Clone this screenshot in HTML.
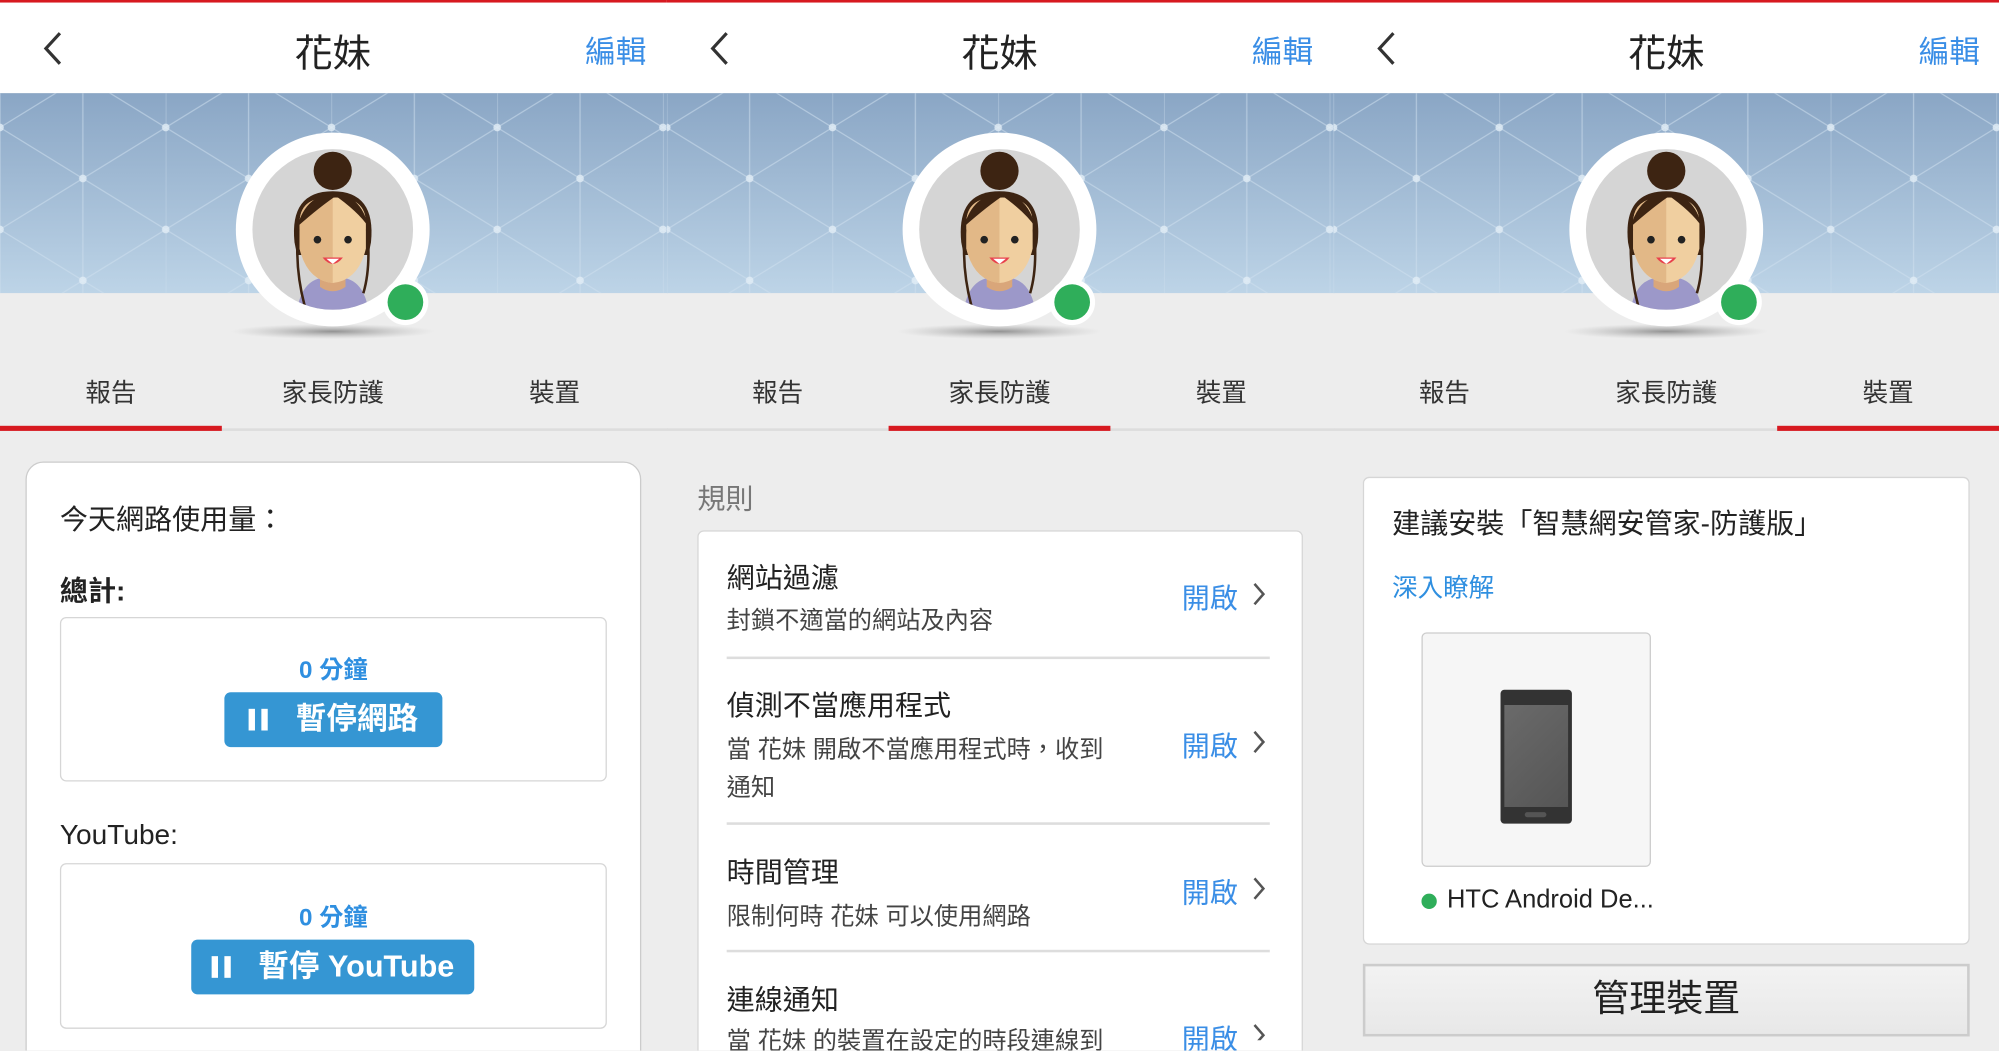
<!DOCTYPE html>
<html><head><meta charset="utf-8">
<style>
*{margin:0;padding:0;box-sizing:border-box}
html,body{width:1999px;height:1051px;overflow:hidden;background:#ededed}
body{font-family:"Liberation Sans","Noto Sans CJK TC",sans-serif;color:#222}
#w{position:absolute;left:0;top:0;width:1568px;height:824px;transform:scale(1.27487);transform-origin:0 0;background:#ededed}
.a{position:absolute;white-space:nowrap}
.p{position:absolute;top:0;width:524px;height:824px;overflow:hidden}
.hdr{position:absolute;left:0;top:0;width:524px;height:73px;background:#fff;border-top:2px solid #d71920}
.ttl{left:0;width:522px;text-align:center;top:17px;font-size:30px;color:#222}
.edit{left:459px;top:21px;font-size:24px;color:#3a8ee6}
.ban{position:absolute;left:0;top:73px;width:524px;height:157px}
.tab{top:292px;font-size:20px;color:#333;width:174px;text-align:center}
.tline{position:absolute;top:336px;left:0;width:524px;height:2px;background:#ddd}
.tact{position:absolute;top:334px;width:174px;height:4px;background:#d71920}
.card{position:absolute;background:#fff;border:1px solid #d6d6d6}
.blue{color:#2f8fe0}
.btn{position:absolute;background:#3596d3;color:#fff;border-radius:5px;font-weight:bold;font-size:24px;text-align:center;line-height:43px}
.btn b{display:inline-block;width:5px;height:17px;background:#fff;margin-right:5px;vertical-align:-1px}
.row{font-size:22px;color:#222}
.sub{font-size:19px;color:#444}
.on{font-size:22px;color:#3a8ee6}
.div{position:absolute;left:47px;width:426px;height:2px;background:#ddd}
</style></head><body><div id="w">

<svg width="0" height="0" style="position:absolute">
<defs>
<linearGradient id="bg" x1="0" y1="0" x2="0" y2="1"><stop offset="0" stop-color="#8aa6c5"/><stop offset="1" stop-color="#bdd4e7"/></linearGradient>
<pattern id="lat" width="130" height="80" patternUnits="userSpaceOnUse" x="0" y="-13">
<g stroke="#cfe0ef" stroke-opacity=".55" stroke-width="1" fill="none">
<line x1="0" y1="0" x2="0" y2="80"/><line x1="65" y1="0" x2="65" y2="80"/>
<line x1="0" y1="40" x2="65" y2="0"/><line x1="0" y1="40" x2="65" y2="80"/>
<line x1="65" y1="0" x2="130" y2="40"/><line x1="65" y1="80" x2="130" y2="40"/>
</g>
<g fill="#e2edf6" fill-opacity=".8"><circle cx="0" cy="40" r="3"/><circle cx="130" cy="40" r="3"/><circle cx="65" cy="0" r="3"/><circle cx="65" cy="80" r="3"/></g>
</pattern>
<radialGradient id="sh"><stop offset="0" stop-color="#555" stop-opacity=".6"/><stop offset="1" stop-color="#999" stop-opacity="0"/></radialGradient>
<g id="av">
<ellipse cx="0" cy="80" rx="80" ry="6" fill="url(#sh)"/>
<circle r="76" fill="#fff"/>
<circle r="63" fill="#d5d5d5"/>
<clipPath id="cc"><circle r="63"/></clipPath>
<g clip-path="url(#cc)">
<path d="M-28 63 Q-24 40 -8 38 L8 38 Q24 40 28 63Z" fill="#9c98c9"/>
<path d="M-10 28 L-10 45 Q0 52 10 45 L10 28Z" fill="#d9a67a"/>
<path d="M-30 10 Q-34 -30 0 -30 Q34 -30 30 10 L28 20 L-28 20Z" fill="#3d2412"/>
<circle cx="0" cy="-46" r="15" fill="#3d2412"/>
<path d="M-26 -5 Q-26 -26 0 -25 Q26 -26 26 -5 L26 15 Q20 40 0 42 Q-20 40 -26 15Z" fill="#f0cfa0"/>
<path d="M0 -25 Q-26 -26 -26 -5 L-26 15 Q-20 40 0 42Z" fill="#e2b887"/>
<path d="M-28 -2 Q-20 -30 5 -28 Q-10 -18 -28 -2Z M28 -2 Q22 -28 0 -28 Q20 -14 28 -2Z" fill="#3d2412"/>
<path d="M-27 0 Q-30 30 -22 60 M27 0 Q30 30 24 50" stroke="#3d2412" stroke-width="2" fill="none"/>
<circle cx="-12" cy="8" r="3" fill="#222"/><circle cx="12" cy="8" r="3" fill="#222"/>
<path d="M-8 22 Q0 32 8 22Z" fill="#e8414c"/><path d="M-5 23 L5 23 L0 27Z" fill="#fff"/>
</g>
<circle cx="57" cy="57" r="18" fill="#fff"/><circle cx="57" cy="57" r="14" fill="#2fae5a"/>
</g>
</defs></svg>

<!-- PANEL 1 -->
<div class="p" style="left:0">
<div class="hdr"></div>
<svg class="a" style="left:32px;top:24px" width="20" height="28"><path d="M15 2 L4 14 L15 26" stroke="#333" stroke-width="2.5" fill="none"/></svg>
<div class="a ttl">花妹</div><div class="a edit">編輯</div>
<svg class="ban" width="524" height="157"><rect width="524" height="157" fill="url(#bg)"/><rect width="524" height="157" fill="url(#lat)"/></svg>
<svg class="a" style="left:160px;top:90px" width="202" height="190"><use href="#av" x="101" y="90"/></svg>
<div class="a tab" style="left:0">報告</div><div class="a tab" style="left:174px">家長防護</div><div class="a tab" style="left:348px">裝置</div>
<div class="tline"></div><div class="tact" style="left:0"></div>
<div class="card" style="left:20px;top:362px;width:483px;height:480px;border-radius:14px;border-color:#ccc"></div>
<div class="a" style="left:47px;top:390px;font-size:22px">今天網路使用量：</div>
<div class="a" style="left:47px;top:446px;font-size:22px;font-weight:bold">總計:</div>
<div class="card" style="left:47px;top:484px;width:429px;height:129px;border-radius:5px"></div>
<div class="a blue" style="left:47px;width:429px;text-align:center;top:511px;font-size:19px;font-weight:bold">0 分鐘</div>
<div class="btn" style="left:176px;top:543px;width:171px;height:43px"><b></b><b style="margin-right:22px"></b>暫停網路</div>
<div class="a" style="left:47px;top:642px;font-size:22px">YouTube:</div>
<div class="card" style="left:47px;top:677px;width:429px;height:130px;border-radius:5px"></div>
<div class="a blue" style="left:47px;width:429px;text-align:center;top:705px;font-size:19px;font-weight:bold">0 分鐘</div>
<div class="btn" style="left:150px;top:737px;width:222px;height:43px"><b></b><b style="margin-right:22px"></b>暫停 YouTube</div>
</div>

<!-- PANEL 2 -->
<div class="p" style="left:523px">
<div class="hdr"></div>
<svg class="a" style="left:32px;top:24px" width="20" height="28"><path d="M15 2 L4 14 L15 26" stroke="#333" stroke-width="2.5" fill="none"/></svg>
<div class="a ttl">花妹</div><div class="a edit">編輯</div>
<svg class="ban" width="524" height="157"><rect width="524" height="157" fill="url(#bg)"/><rect width="524" height="157" fill="url(#lat)"/></svg>
<svg class="a" style="left:160px;top:90px" width="202" height="190"><use href="#av" x="101" y="90"/></svg>
<div class="a tab" style="left:0">報告</div><div class="a tab" style="left:174px">家長防護</div><div class="a tab" style="left:348px">裝置</div>
<div class="tline"></div><div class="tact" style="left:174px"></div>
<div class="a" style="left:24px;top:374px;font-size:22px;color:#777">規則</div>
<div class="card" style="left:24px;top:416px;width:475px;height:420px;border-radius:5px"></div>
<div class="a row" style="left:47px;top:436px">網站過濾</div>
<div class="a sub" style="left:47px;top:472px">封鎖不適當的網站及內容</div>
<div class="div" style="top:515px"></div>
<div class="a row" style="left:47px;top:536px">偵測不當應用程式</div>
<div class="a sub" style="left:47px;top:573px">當 花妹 開啟不當應用程式時，收到</div>
<div class="a sub" style="left:47px;top:603px">通知</div>
<div class="div" style="top:645px"></div>
<div class="a row" style="left:47px;top:667px">時間管理</div>
<div class="a sub" style="left:47px;top:704px">限制何時 花妹 可以使用網路</div>
<div class="div" style="top:745px"></div>
<div class="a row" style="left:47px;top:767px">連線通知</div>
<div class="a sub" style="left:47px;top:802px">當 花妹 的裝置在設定的時段連線到</div>
<div class="a on" style="left:404px;top:452px">開啟</div>
<div class="a on" style="left:404px;top:568px">開啟</div>
<div class="a on" style="left:404px;top:683px">開啟</div>
<div class="a on" style="left:404px;top:798px">開啟</div>
<svg class="a" style="left:458px;top:456px" width="14" height="360"><g stroke="#555" stroke-width="2" fill="none"><path d="M3 2 L10 10 L3 18"/><path d="M3 118 L10 126 L3 134"/><path d="M3 233 L10 241 L3 249"/><path d="M3 348 L10 356 L3 364"/></g></svg>
</div>

<!-- PANEL 3 -->
<div class="p" style="left:1046px">
<div class="hdr"></div>
<svg class="a" style="left:32px;top:24px" width="20" height="28"><path d="M15 2 L4 14 L15 26" stroke="#333" stroke-width="2.5" fill="none"/></svg>
<div class="a ttl">花妹</div><div class="a edit">編輯</div>
<svg class="ban" width="524" height="157"><rect width="524" height="157" fill="url(#bg)"/><rect width="524" height="157" fill="url(#lat)"/></svg>
<svg class="a" style="left:160px;top:90px" width="202" height="190"><use href="#av" x="101" y="90"/></svg>
<div class="a tab" style="left:0">報告</div><div class="a tab" style="left:174px">家長防護</div><div class="a tab" style="left:348px">裝置</div>
<div class="tline"></div><div class="tact" style="left:348px;width:176px"></div>
<div class="card" style="left:23px;top:374px;width:476px;height:367px;border-radius:5px"></div>
<div class="a" style="left:46px;top:393px;font-size:22px">建議安裝「智慧網安管家-防護版」</div>
<div class="a" style="left:46px;top:445px;font-size:20px;color:#2f8fe0">深入瞭解</div>
<div class="card" style="left:69px;top:496px;width:180px;height:184px;background:#f6f6f6;border-color:#ccc;border-radius:4px"></div>
<div class="a" style="left:131px;top:541px;width:56px;height:105px;background:#333;border-radius:3px"><div style="position:absolute;left:3px;top:12px;width:50px;height:80px;background:linear-gradient(135deg,#6a6a6a,#555)"></div><div style="position:absolute;left:19px;top:96px;width:17px;height:4px;background:#555;border-radius:2px"></div></div>
<div class="a" style="left:69px;top:701px;width:12px;height:12px;border-radius:50%;background:#2fae5a"></div>
<div class="a" style="left:89px;top:695px;font-size:20px;color:#222">HTC Android De...</div>
<div class="a" style="left:23px;top:756px;width:476px;height:57px;background:linear-gradient(#f2f2f2,#e8e8e8);border:2px solid #ccc;text-align:center;line-height:52px;font-size:29px;color:#222">管理裝置</div>
</div>

</div></body></html>
